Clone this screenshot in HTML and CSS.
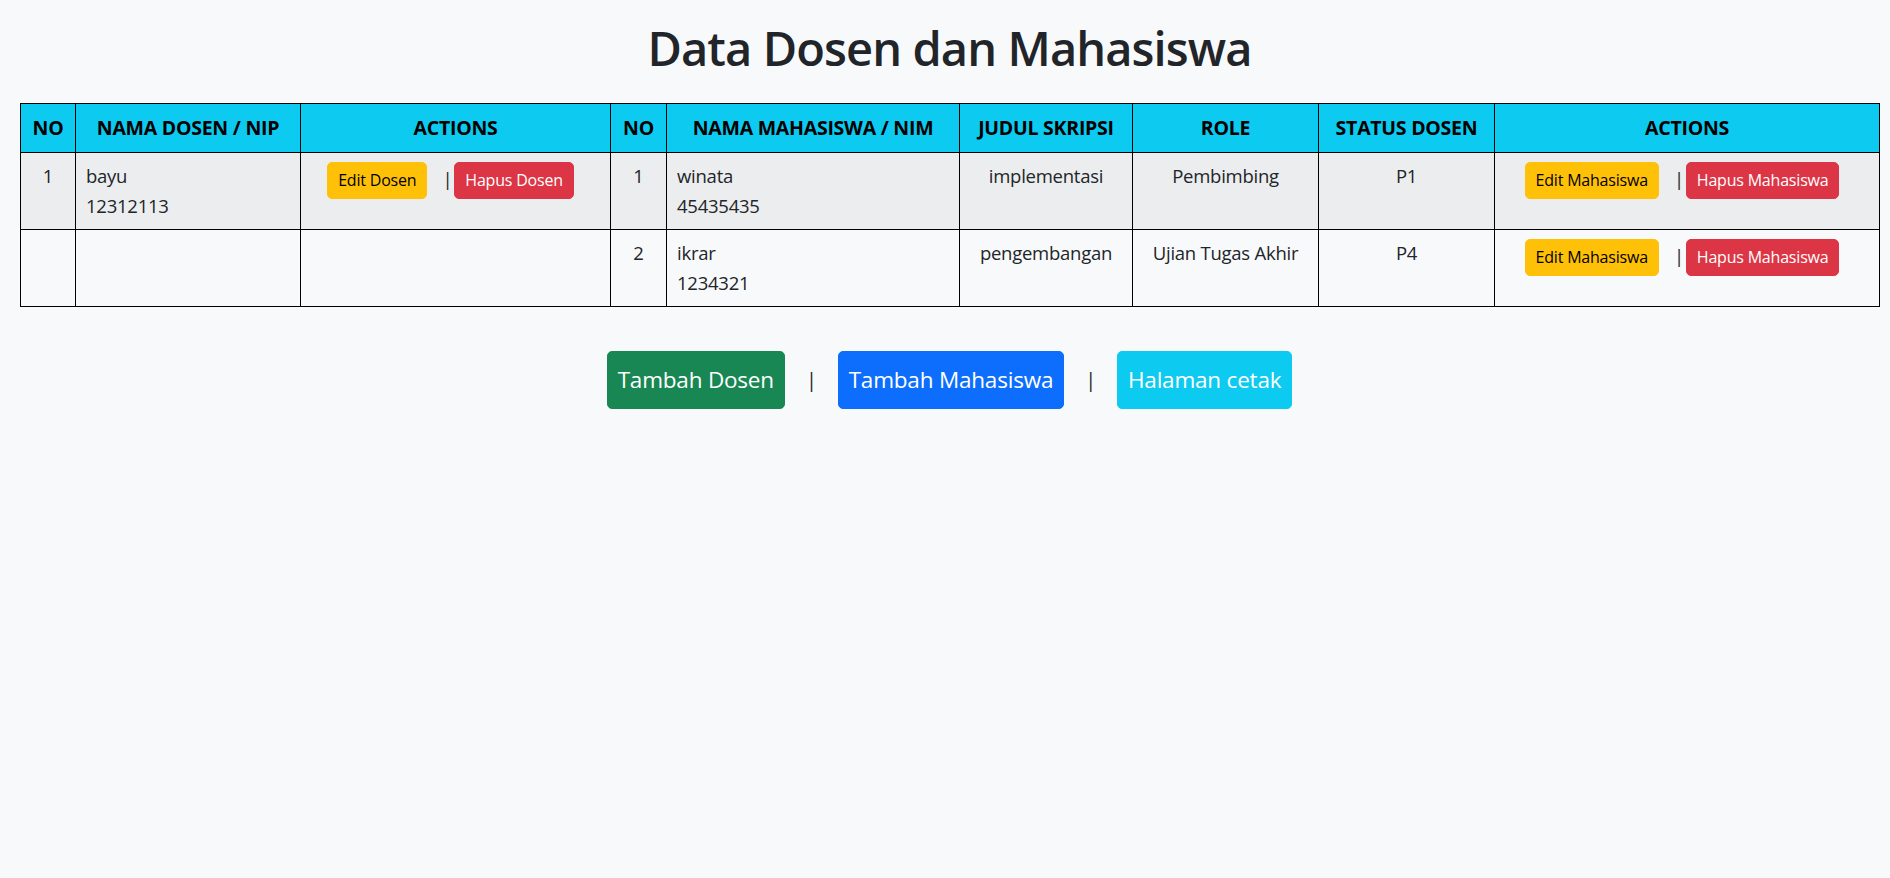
FILE: index.html
```html
<!DOCTYPE html>
<html lang="id">
<head>
<meta charset="utf-8">
<title>Data Dosen dan Mahasiswa</title>
<link rel="stylesheet" href="styles.css">
</head>
<body>
<div class="page">
  <h1 class="title">Data Dosen dan Mahasiswa</h1>
  <table class="data">
    <colgroup>
      <col class="c-no"><col class="c-dosen"><col class="c-act1"><col class="c-no2"><col class="c-mhs"><col class="c-judul"><col class="c-role"><col class="c-status"><col class="c-act2">
    </colgroup>
    <thead>
      <tr>
        <th>NO</th><th>NAMA DOSEN / NIP</th><th>ACTIONS</th><th>NO</th><th>NAMA MAHASISWA / NIM</th><th>JUDUL SKRIPSI</th><th>ROLE</th><th>STATUS DOSEN</th><th>ACTIONS</th>
      </tr>
    </thead>
    <tbody>
      <tr class="striped">
        <td class="center">1</td>
        <td>bayu<br>12312113</td>
        <td class="center"><span class="btn btn-sm btn-warning">Edit Dosen</span><span class="sep">|</span><span class="btn btn-sm btn-danger">Hapus Dosen</span></td>
        <td class="center">1</td>
        <td>winata<br>45435435</td>
        <td class="center">implementasi</td>
        <td class="center">Pembimbing</td>
        <td class="center">P1</td>
        <td class="center"><span class="btn btn-sm btn-warning">Edit Mahasiswa</span><span class="sep">|</span><span class="btn btn-sm btn-danger">Hapus Mahasiswa</span></td>
      </tr>
      <tr>
        <td></td>
        <td></td>
        <td></td>
        <td class="center">2</td>
        <td>ikrar<br>1234321</td>
        <td class="center">pengembangan</td>
        <td class="center">Ujian Tugas Akhir</td>
        <td class="center">P4</td>
        <td class="center"><span class="btn btn-sm btn-warning">Edit Mahasiswa</span><span class="sep">|</span><span class="btn btn-sm btn-danger">Hapus Mahasiswa</span></td>
      </tr>
    </tbody>
  </table>
  <div class="bottom">
    <span class="btn btn-big btn-success">Tambah Dosen</span>
    <span class="sep2">|</span>
    <span class="btn btn-big btn-primary">Tambah Mahasiswa</span>
    <span class="sep2">|</span>
    <span class="btn btn-big btn-info">Halaman cetak</span>
  </div>
</div>
</body>
</html>
```
FILE: styles.css
```css
html { font-size: 20px; }
body {
  margin: 0;
  background: #f8f9fa;
  color: #212529;
  font-family: "Open Sans", "Noto Sans", sans-serif;
  font-size: 18.5px;
  letter-spacing: -0.25px;
  line-height: 30px;
}
.page {
  width: 1859px;
  margin-left: 20px;
}
.title {
  margin: 18px 0 25px;
  font-size: 47px;
  font-weight: 600;
  letter-spacing: -0.9px;
  line-height: 60px;
  text-align: center;
}
.data {
  width: 100%;
  border-collapse: collapse;
  table-layout: fixed;
}
.c-no { width: 55px; }
.c-dosen { width: 225px; }
.c-act1 { width: 310px; }
.c-no2 { width: 56px; }
.c-mhs { width: 293px; }
.c-judul { width: 173px; }
.c-role { width: 186px; }
.c-status { width: 176px; }
.c-act2 { width: 385px; }
.data th, .data td {
  border: 1px solid #000;
  padding: 8px 10px;
  vertical-align: top;
}
.data th {
  padding: 9px 10px;
  background: #0dcaf0;
  color: #000;
  font-size: 19.5px;
  font-weight: 700;
  letter-spacing: -0.25px;
  text-align: center;
  white-space: nowrap;
}
.data td { color: #212529; }
.striped td { background: #ecedee; }
.center { text-align: center; }
.btn {
  display: inline-block;
  border: 1px solid transparent;
  color: #fff;
  white-space: nowrap;
  vertical-align: top;
}
.btn-sm {
  margin-top: 1px;
  font-size: 16px;
  letter-spacing: -0.2px;
  line-height: 25px;
  padding: 5px 10px;
  border-radius: 5px;
}
.data .btn-danger { margin-right: 10px; }
.btn-warning { background: #ffc107; border-color: #ffc107; color: #000; }
.btn-danger { background: #dc3545; border-color: #dc3545; }
.btn-success { background: #198754; border-color: #198754; }
.btn-primary { background: #0d6efd; border-color: #0d6efd; }
.btn-info { background: #0dcaf0; border-color: #0dcaf0; }
.sep {
  display: inline-block;
  margin: 0 2px 0 15px;
  vertical-align: top;
  line-height: 36px;
}
.bottom {
  display: flex;
  justify-content: center;
  align-items: center;
  gap: 21px;
  margin-top: 44px;
}
.btn-big {
  font-size: 22.5px;
  letter-spacing: -0.2px;
  line-height: 38px;
  padding: 9px 10px;
  border-radius: 5px;
}
.sep2 { font-size: 20px; }
```
